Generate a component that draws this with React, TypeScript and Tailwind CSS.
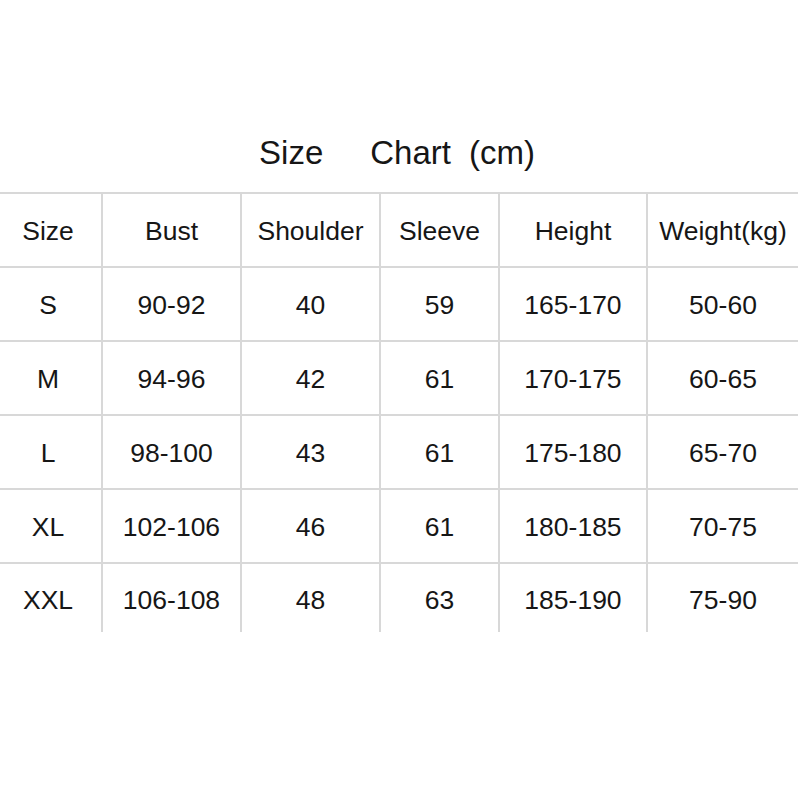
const headers = ['Size', 'Bust', 'Shoulder', 'Sleeve', 'Height', 'Weight(kg)']

const rows = [
  ['S', '90-92', '40', '59', '165-170', '50-60'],
  ['M', '94-96', '42', '61', '170-175', '60-65'],
  ['L', '98-100', '43', '61', '175-180', '65-70'],
  ['XL', '102-106', '46', '61', '180-185', '70-75'],
  ['XXL', '106-108', '48', '63', '185-190', '75-90'],
]

export default function App() {
  return (
    <div
      className="w-[800px] h-[800px] bg-white text-[#161616] pt-[136px]"
      style={{ fontFamily: '"Liberation Sans", Arial, sans-serif' }}
    >
      <div className="w-[798px] flex justify-center text-[33px] leading-[33px] h-[33px] mb-[23px] pr-[4px]">
        <span>Size</span>
        <span className="ml-[47px]">Chart</span>
        <span className="ml-[18px]">(cm)</span>
      </div>

      <div className="w-[798px] border-t-2 border-[#d8d8d8] grid grid-cols-[103px_139px_139px_119px_148px_150px] text-[26.5px]">
        {headers.map((h, i) => (
          <div
            key={h}
            className={`h-[74px] pt-[3px] flex items-center justify-center border-b-2 border-[#d8d8d8] ${i < 5 ? 'border-r-2' : ''} ${i === 0 ? 'pr-[5px]' : ''}`}
          >
            {h}
          </div>
        ))}
        {rows.map((row, r) =>
          row.map((cell, i) => (
            <div
              key={r + '-' + i}
              className={`flex items-center justify-center border-[#d8d8d8] ${r < 4 ? 'h-[74px] pt-[3px] border-b-2' : 'h-[68px] pt-[5px]'} ${i < 5 ? 'border-r-2' : ''} ${i === 0 ? 'pr-[5px]' : ''}`}
            >
              {cell}
            </div>
          ))
        )}
      </div>
    </div>
  )
}
